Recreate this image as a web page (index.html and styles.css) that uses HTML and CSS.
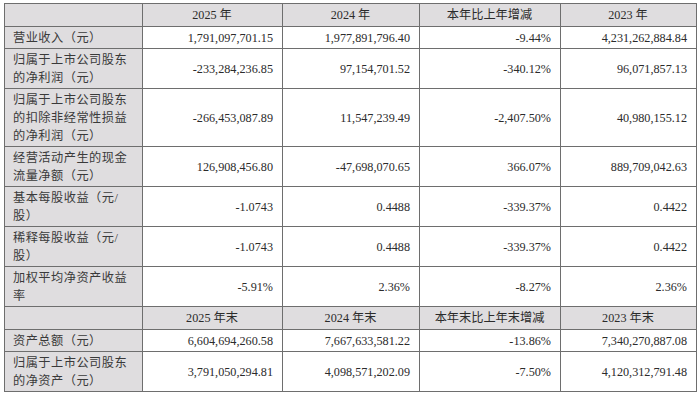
FILE: index.html
```html
<!DOCTYPE html>
<html lang="zh-CN">
<head>
<meta charset="utf-8">
<title>主要会计数据</title>
<link rel="stylesheet" href="styles.css">
</head>
<body>
<table class="fin">
  <colgroup>
    <col class="c-label"><col class="c1"><col class="c2"><col class="c3"><col class="c4">
  </colgroup>
  <tr class="head">
    <td class="label"></td><td>2025 年</td><td>2024 年</td><td>本年比上年增减</td><td>2023 年</td>
  </tr>
  <tr>
    <td class="label">营业收入（元）</td><td>1,791,097,701.15</td><td>1,977,891,796.40</td><td>-9.44%</td><td>4,231,262,884.84</td>
  </tr>
  <tr>
    <td class="label">归属于上市公司股东<br>的净利润（元）</td><td>-233,284,236.85</td><td>97,154,701.52</td><td>-340.12%</td><td>96,071,857.13</td>
  </tr>
  <tr>
    <td class="label">归属于上市公司股东<br>的扣除非经常性损益<br>的净利润（元）</td><td>-266,453,087.89</td><td>11,547,239.49</td><td>-2,407.50%</td><td>40,980,155.12</td>
  </tr>
  <tr>
    <td class="label">经营活动产生的现金<br>流量净额（元）</td><td>126,908,456.80</td><td>-47,698,070.65</td><td>366.07%</td><td>889,709,042.63</td>
  </tr>
  <tr>
    <td class="label">基本每股收益（元/<br>股）</td><td>-1.0743</td><td>0.4488</td><td>-339.37%</td><td>0.4422</td>
  </tr>
  <tr>
    <td class="label">稀释每股收益（元/<br>股）</td><td>-1.0743</td><td>0.4488</td><td>-339.37%</td><td>0.4422</td>
  </tr>
  <tr>
    <td class="label">加权平均净资产收益<br>率</td><td>-5.91%</td><td>2.36%</td><td>-8.27%</td><td>2.36%</td>
  </tr>
  <tr class="head">
    <td class="label"></td><td>2025 年末</td><td>2024 年末</td><td>本年末比上年末增减</td><td>2023 年末</td>
  </tr>
  <tr>
    <td class="label">资产总额（元）</td><td>6,604,694,260.58</td><td>7,667,633,581.22</td><td>-13.86%</td><td>7,340,270,887.08</td>
  </tr>
  <tr>
    <td class="label">归属于上市公司股东<br>的净资产（元）</td><td>3,791,050,294.81</td><td>4,098,571,202.09</td><td>-7.50%</td><td>4,120,312,791.48</td>
  </tr>
</table>
</body>
</html>
```
FILE: styles.css
```css
html, body {
  margin: 0;
  padding: 0;
  background: #ffffff;
}

.fin {
  margin: 3px 0 0 4px;
  border-collapse: collapse;
  table-layout: fixed;
  width: 692px;
  font-family: "Liberation Serif", "Noto Sans CJK SC", serif;
  font-size: 12.2px;
  color: #2b2b2b;
}

.c-label { width: 138px; }
.c1 { width: 140px; }
.c2 { width: 137px; }
.c3 { width: 141px; }
.c4 { width: 136px; }

.fin td {
  border: 1px solid #6e6e6e;
  padding: 1.5px 9px 1.5px 8px;
  line-height: 18px;
  text-align: right;
  vertical-align: middle;
  background: #ffffff;
  white-space: nowrap;
}

.fin td.label {
  text-align: left;
  background: #dfdddf;
  letter-spacing: 0.5px;
  color: #3a3a3a;
}

.fin tr.head td {
  background: #dfdddf;
  text-align: center;
  height: 20px;
  padding-top: 1px;
  padding-bottom: 1px;
}
```
